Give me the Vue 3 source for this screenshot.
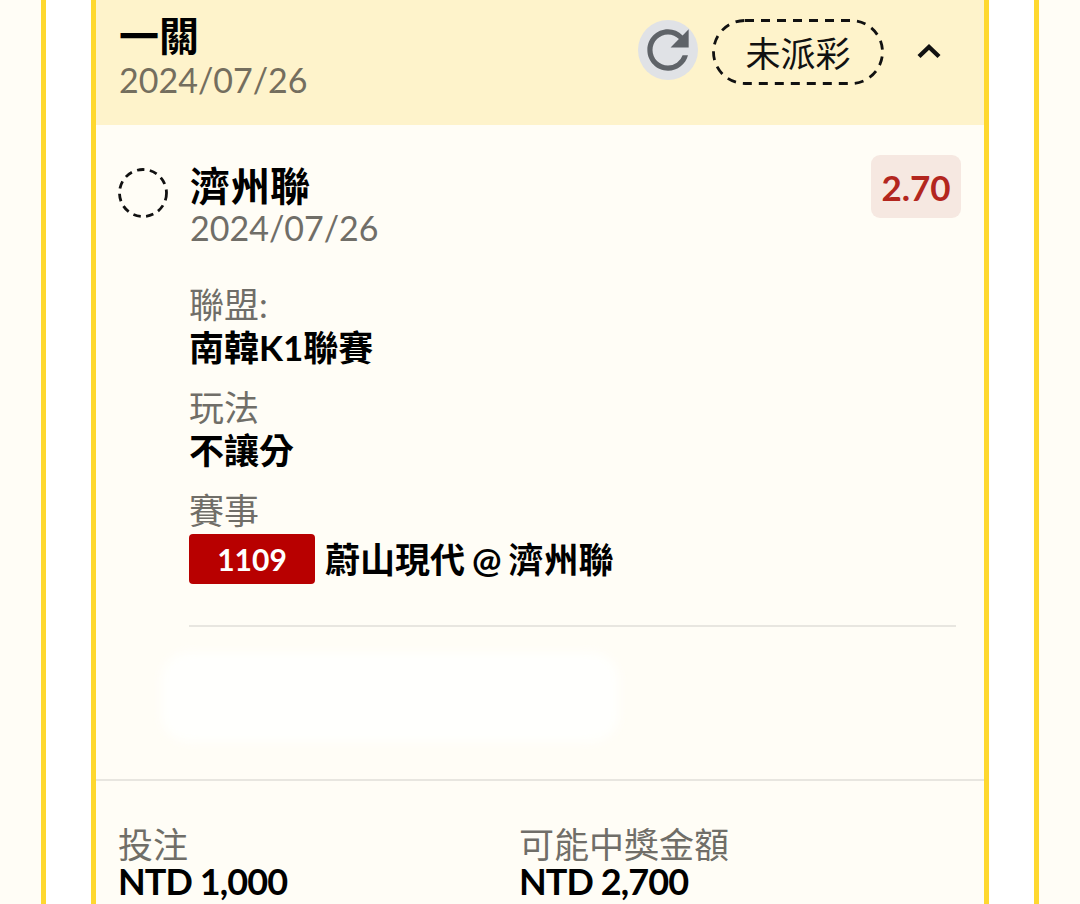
<script setup>
const infoRows = [
  { label: '聯盟:', value: '南韓K1聯賽' },
  { label: '玩法', value: '不讓分' }
]

const totals = [
  { label: '投注', value: 'NTD 1,000' },
  { label: '可能中獎金額', value: 'NTD 2,700' }
]
</script>

<template>
  <div class="page">
    <div class="outerCard">
      <div class="innerCard">
        <header class="cardHeader">
          <div class="headerTitle">
            <h1 class="betType">一關</h1>
            <p class="betDate">2024/07/26</p>
          </div>
          <div class="headerActions">
            <div class="refreshBtn">
              <svg class="refreshIcon" width="62" height="62" viewBox="0 0 24 24" fill="#5f6368">
                <path d="M17.65 6.35A7.958 7.958 0 0 0 12 4c-4.42 0-7.99 3.58-7.99 8s3.57 8 7.99 8c3.73 0 6.84-2.55 7.73-6h-2.08A5.99 5.99 0 0 1 12 18c-3.31 0-6-2.69-6-6s2.69-6 6-6c1.66 0 3.14.69 4.22 1.78L13 11h7V4l-2.35 2.35z" />
              </svg>
            </div>
            <div class="statusPill">
              <svg class="pillOutline" width="172" height="66" viewBox="0 0 172 66" fill="none" stroke="#111" stroke-width="2.8" stroke-dasharray="9 7">
                <rect x="1.5" y="1.5" width="169" height="63" rx="31.5" />
              </svg>
              未派彩
            </div>
            <svg class="chevron" width="26" height="18" viewBox="0 0 26 18" fill="none" stroke="#111" stroke-width="4.4">
              <path d="M3 14.5 L13 5 L23 14.5" />
            </svg>
          </div>
        </header>

        <section class="legSection">
          <div class="legTop">
            <svg class="legCircle" width="50" height="50" viewBox="0 0 50 50" fill="none" stroke="#111" stroke-width="2.8" stroke-dasharray="7.5 5.5">
              <circle cx="25" cy="25" r="23.5" />
            </svg>
            <div class="legTitle">
              <h2 class="legTeam">濟州聯</h2>
              <p class="legDate">2024/07/26</p>
            </div>
            <span class="oddsBadge">2.70</span>
          </div>

          <div class="legBody">
            <div v-for="row in infoRows" :key="row.label" class="infoRow">
              <p class="infoLabel">{{ row.label }}</p>
              <p class="infoValue">{{ row.value }}</p>
            </div>
            <div class="infoRow">
              <p class="infoLabel">賽事</p>
              <div class="matchRow">
                <span class="matchCode">1109</span>
                <span class="infoValue matchName">蔚山現代 @ 濟州聯</span>
              </div>
            </div>
            <div class="legRule"></div>
            <div class="redacted"></div>
          </div>
        </section>

        <section class="totals">
          <div v-for="item in totals" :key="item.label" class="totalItem">
            <p class="infoLabel totalLabel">{{ item.label }}</p>
            <p class="totalValue">{{ item.value }}</p>
          </div>
        </section>
      </div>
    </div>
  </div>
</template>

<style>
html, body {
  margin: 0;
  background: #fffdf6;
  overflow: hidden;
}
</style>

<style scoped>
.page {
  height: 904px;
  padding: 0 41px;
  box-sizing: border-box;
  background: #fffdf6;
  font-family: Lato, "Noto Sans CJK TC", sans-serif;
  overflow: hidden;
}

p, h1, h2 {
  margin: 0;
}

.outerCard {
  height: 100%;
  padding: 0 45px;
  background: #fff;
  border-left: 5px solid #fed82f;
  border-right: 5px solid #fed82f;
}

.innerCard {
  height: 100%;
  background: #fffdf6;
  border-left: 5px solid #fed82f;
  border-right: 5px solid #fed82f;
}

.cardHeader {
  height: 125px;
  box-sizing: border-box;
  padding: 14px 42px 0 23px;
  display: flex;
  justify-content: space-between;
  background: #fef3cb;
}

.betType {
  font-size: 40px;
  line-height: 44px;
  font-weight: 700;
  color: #000;
}

.betDate {
  margin-top: 3px;
  font-size: 34px;
  line-height: 38px;
  color: #746e5e;
}

.headerActions {
  display: flex;
  align-items: center;
  height: 75px;
}

.refreshBtn {
  width: 60px;
  height: 60px;
  margin-top: -3px;
  border-radius: 50%;
  background: #e0e2e6;
  display: flex;
  align-items: center;
  justify-content: center;
}

.refreshIcon {
  flex-shrink: 0;
}

.statusPill {
  position: relative;
  margin-left: 14px;
  width: 172px;
  height: 66px;
  display: flex;
  align-items: center;
  justify-content: center;
  font-size: 35px;
  color: #111;
}

.pillOutline {
  position: absolute;
  left: 0;
  top: 0;
}

.chevron {
  margin-left: 32px;
  margin-top: -2px;
}

.legSection {
  padding: 30px 23px 0 22px;
  height: 656px;
  box-sizing: border-box;
  border-bottom: 2px solid #e8e6e0;
}

.legTop {
  display: flex;
  align-items: flex-start;
}

.legCircle {
  margin-top: 13px;
  flex-shrink: 0;
}

.legTitle {
  margin-left: 22px;
  margin-top: 9px;
  flex: 1;
}

.legTeam {
  font-size: 40px;
  line-height: 44px;
  font-weight: 700;
  color: #000;
}

.legDate {
  font-size: 34px;
  line-height: 40px;
  color: #706e68;
}

.oddsBadge {
  width: 90px;
  height: 63px;
  border-radius: 9px;
  background: #f6e8e1;
  display: flex;
  align-items: center;
  justify-content: center;
  font-size: 35px;
  font-weight: 700;
  color: #b3261e;
}

.legBody {
  position: relative;
  margin: 36px 5px 0 71px;
}

.infoRow {
  margin-bottom: 17px;
}

.infoLabel {
  font-size: 35px;
  line-height: 40px;
  color: #706e68;
}

.infoValue {
  font-size: 35px;
  line-height: 46px;
  font-weight: 700;
  color: #000;
}

.matchRow {
  margin-top: 4px;
  display: flex;
  align-items: center;
  gap: 10px;
}

.matchName {
  word-spacing: -1.5px;
}

.matchCode {
  width: 126px;
  height: 50px;
  border-radius: 4px;
  background: #b80000;
  display: flex;
  align-items: center;
  justify-content: center;
  font-size: 30px;
  font-weight: 700;
  color: #fff;
}

.legRule {
  margin-top: 41px;
  height: 2px;
  background: #e8e6e0;
}

.redacted {
  position: absolute;
  left: -28px;
  top: 368px;
  width: 458px;
  height: 90px;
  border-radius: 28px;
  background: #fffffd;
  filter: blur(6px);
}

.totals {
  display: flex;
  padding: 44px 23px 0 22px;
}

.totalItem {
  width: 401px;
}

.totalLabel {
  line-height: 38px;
}

.totalValue {
  font-size: 36px;
  line-height: 36px;
  font-weight: 700;
  color: #000;
  letter-spacing: -0.9px;
}
</style>
